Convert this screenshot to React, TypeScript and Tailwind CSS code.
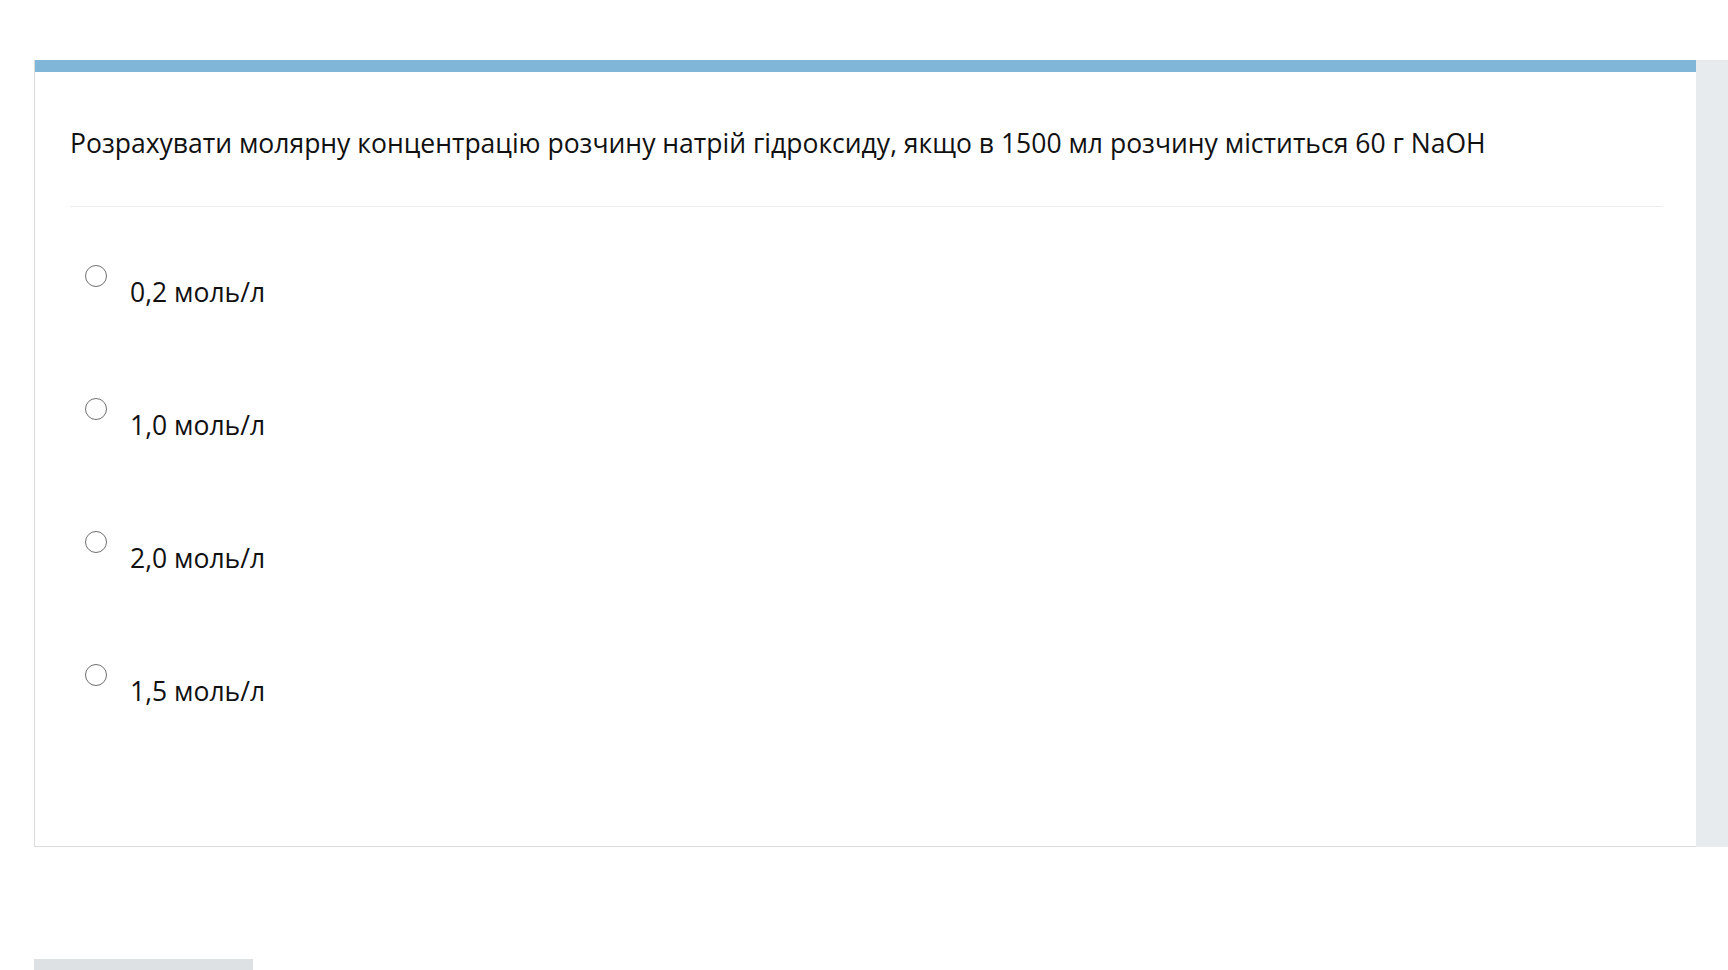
export default function App() {
  const options = ["0,2 моль/л", "1,0 моль/л", "2,0 моль/л", "1,5 моль/л"];

  return (
    <div className="h-[970px] overflow-hidden bg-white pt-[60px] font-['Open_Sans',sans-serif] text-[#111]">
      <div className="flex pl-[34px]">
        <div className="w-[1662px] border-l border-b border-[#dcdcdc] bg-white">
          <div className="h-[12px] bg-[#80b7d9]" />
          <div className="pl-[35px] pr-[33px]">
            <p className="pt-[53px] pb-[45px] text-[26.5px] leading-[36px]">
              Розрахувати молярну концентрацію розчину натрій гідроксиду, якщо в 1500 мл розчину міститься 60 г NaOH
            </p>
            <div className="h-px bg-[#ececec]" />
          </div>
          <div className="pl-[50px] pt-[58px] pb-[49px]">
            {options.map((o) => (
              <label key={o} className="flex h-[133px] items-start">
                <span className="h-[22px] w-[22px] rounded-full border-[1.5px] border-[#6f6f6f]" />
                <span className="ml-[23px] mt-[9px] text-[26.5px] leading-[36px]">{o}</span>
              </label>
            ))}
          </div>
        </div>
        <div className="flex-1 bg-[#e8ebee]" />
      </div>
      <div className="mt-[112px] ml-[34px] h-[12px] w-[219px] bg-[#dee1e4]" />
    </div>
  );
}
